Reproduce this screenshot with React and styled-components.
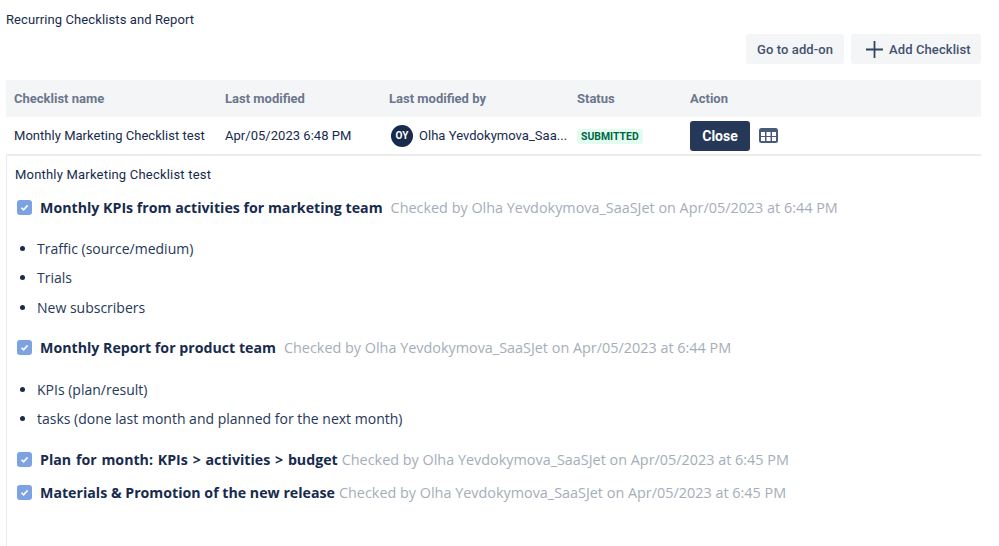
import React from "react";
import styled, { createGlobalStyle } from "styled-components";

const Global = createGlobalStyle`
  html, body { margin: 0; padding: 0; background: #fff; overflow: hidden; }
  body { font-family: Roboto, "Liberation Sans", sans-serif; color: #172b4d; }
`;

const Page = styled.div`
  width: 975px;
  height: 546px;
  padding-left: 6px;
  overflow: hidden;
`;
const Title = styled.div`
  height: 34px;
  padding-top: 12px;
  box-sizing: border-box;
  font-size: 13px;
  line-height: 15px;
  letter-spacing: 0.1px;
  color: #172b4d;
`;
const Toolbar = styled.div`
  display: flex;
  justify-content: flex-end;
  gap: 7px;
  height: 46px;
`;
const ToolButton = styled.button`
  display: flex;
  align-items: center;
  justify-content: ${(p) => (p.$icon ? "flex-start" : "center")};
  gap: 6px;
  width: ${(p) => (p.$icon ? "130px" : "98px")};
  height: 30px;
  padding: 0 0 0 ${(p) => (p.$icon ? "15px" : "0")};
  border: 0;
  border-radius: 3px;
  background: #f4f5f7;
  color: #42526e;
  font: 500 13px Roboto, sans-serif;
  letter-spacing: 0.1px;
`;
const Row = styled.div`
  display: grid;
  grid-template-columns: 211px 164px 188px 121px 1fr;
  align-items: center;
`;
const HeadRow = styled(Row)`
  height: 37px;
  background: #f4f5f7;
  color: #6b778c;
  font-size: 13px;
  font-weight: 700;
`;
const BodyRow = styled(Row)`
  height: 37px;
  font-size: 13px;
  letter-spacing: 0.03px;
  color: #172b4d;
  border-bottom: 2px solid #ebecf0;
`;
const Cell = styled.div`
  padding-left: ${(p) => (p.$flush ? 0 : 8)}px;
  white-space: nowrap;
`;
const UserCell = styled(Cell)`
  display: flex;
  align-items: center;
  gap: 6px;
  padding-left: 10px;
`;
const Avatar = styled.div`
  width: 22px;
  height: 22px;
  border-radius: 50%;
  background: #172b4d;
  color: #fff;
  font-size: 10px;
  font-weight: 700;
  display: flex;
  align-items: center;
  justify-content: center;
`;
const Status = styled.span`
  display: inline-block;
  padding: 0 4px;
  height: 15px;
  line-height: 15px;
  border-radius: 3px;
  background: #e3fcef;
  color: #006644;
  font-size: 10.4px;
  font-weight: 700;
`;
const ActionCell = styled(Cell)`
  display: flex;
  align-items: center;
  gap: 9px;
`;
const CloseButton = styled.button`
  width: 60px;
  height: 30px;
  border: 0;
  border-radius: 3px;
  background: #253858;
  color: #fff;
  font: 700 14px Roboto, sans-serif;
`;
const Panel = styled.div`
  border-left: 1px solid #ebecf0;
  height: 391px;
  padding: 11px 0 0 8px;
`;
const PanelTitle = styled.div`
  font-size: 13px;
  line-height: 15px;
  letter-spacing: 0.2px;
  margin-bottom: 15px;
`;
const Item = styled.div`
  display: flex;
  align-items: center;
  height: 20px;
  margin-top: ${(p) => p.$mt || 0}px;
  font-family: "Open Sans", sans-serif;
  white-space: nowrap;
`;
const Box = styled.span`
  width: 15px;
  height: 15px;
  border-radius: 3px;
  background: #7ba3e4;
  display: flex;
  align-items: center;
  justify-content: center;
  margin: 0 8px 0 2px;
  flex: none;
`;
const ItemName = styled.b`
  font-size: 14.2px;
  font-weight: 700;
  word-spacing: ${(p) => p.$ws || 0}px;
  color: #172b4d;
`;
const Checked = styled.span`
  font-size: 14.4px;
  color: #a5adba;
  margin-left: ${(p) => p.$ml}px;
`;
const Bullets = styled.ul`
  list-style: none;
  margin: 21.3px 0 20.7px;
  padding: 0;
`;
const Bullet = styled.li`
  display: flex;
  align-items: center;
  height: 20px;
  margin-top: 9.5px;
  font-family: "Open Sans", sans-serif;
  font-size: 14px;
  color: #253858;
  &:first-child { margin-top: 0; }
  &::before {
    content: "";
    width: 5px;
    height: 5px;
    border-radius: 50%;
    background: #172b4d;
    margin: 0 12px 0 5px;
  }
`;

const Check = () => (
  <Box>
    <svg width="11" height="11" viewBox="0 0 11 11">
      <path d="M2.5 5.7 4.6 7.8 8.6 3.4" fill="none" stroke="#fff" strokeWidth="1.6" />
    </svg>
  </Box>
);

const Plus = () => (
  <svg width="17" height="17" viewBox="0 0 17 17">
    <path d="M8.5 0v17M0 8.5h17" stroke="#344563" strokeWidth="1.8" />
  </svg>
);

const cellX = [2, 7.5, 13];
const cellY = [4, 9];
const GridIcon = () => (
  <svg width="19" height="15" viewBox="0 0 19 15">
    <rect width="19" height="15" rx="2.5" fill="#4a5a7a" />
    <g fill="#fff">
      {cellY.flatMap((y) => cellX.map((x) => <rect key={`${x}-${y}`} x={x} y={y} width="4" height="4" />))}
    </g>
  </svg>
);

const ItemRow = ({ name, by, ml, mt, ws }) => (
  <Item $mt={mt}>
    <Check />
    <ItemName $ws={ws}>{name}</ItemName>
    <Checked $ml={ml}>{by}</Checked>
  </Item>
);

export default function App() {
  return (
    <Page>
      <Global />
      <Title>Recurring Checklists and Report</Title>
      <Toolbar>
        <ToolButton>Go to add-on</ToolButton>
        <ToolButton $icon><Plus />Add Checklist</ToolButton>
      </Toolbar>
      <HeadRow>
        <Cell>Checklist name</Cell>
        <Cell>Last modified</Cell>
        <Cell>Last modified by</Cell>
        <Cell>Status</Cell>
        <Cell $flush>Action</Cell>
      </HeadRow>
      <BodyRow>
        <Cell>Monthly Marketing Checklist test</Cell>
        <Cell>Apr/05/2023 6:48 PM</Cell>
        <UserCell><Avatar>OY</Avatar>Olha Yevdokymova_Saa...</UserCell>
        <Cell><Status>SUBMITTED</Status></Cell>
        <ActionCell $flush><CloseButton>Close</CloseButton><GridIcon /></ActionCell>
      </BodyRow>
      <Panel>
        <PanelTitle>Monthly Marketing Checklist test</PanelTitle>
        <ItemRow name="Monthly KPIs from activities for marketing team" ml={8} by="Checked by Olha Yevdokymova_SaaSJet on Apr/05/2023 at 6:44 PM" />
        <Bullets>
          <Bullet>Traffic (source/medium)</Bullet>
          <Bullet>Trials</Bullet>
          <Bullet>New subscribers</Bullet>
        </Bullets>
        <ItemRow name="Monthly Report for product team" ml={8} by="Checked by Olha Yevdokymova_SaaSJet on Apr/05/2023 at 6:44 PM" />
        <Bullets>
          <Bullet>KPIs (plan/result)</Bullet>
          <Bullet>tasks (done last month and planned for the next month)</Bullet>
        </Bullets>
        <ItemRow name="Plan for month: KPIs > activities > budget" ml={4} mt={1} ws={1.1} by="Checked by Olha Yevdokymova_SaaSJet on Apr/05/2023 at 6:45 PM" />
        <ItemRow name="Materials & Promotion of the new release" ml={4} mt={13} by="Checked by Olha Yevdokymova_SaaSJet on Apr/05/2023 at 6:45 PM" />
      </Panel>
    </Page>
  );
}
